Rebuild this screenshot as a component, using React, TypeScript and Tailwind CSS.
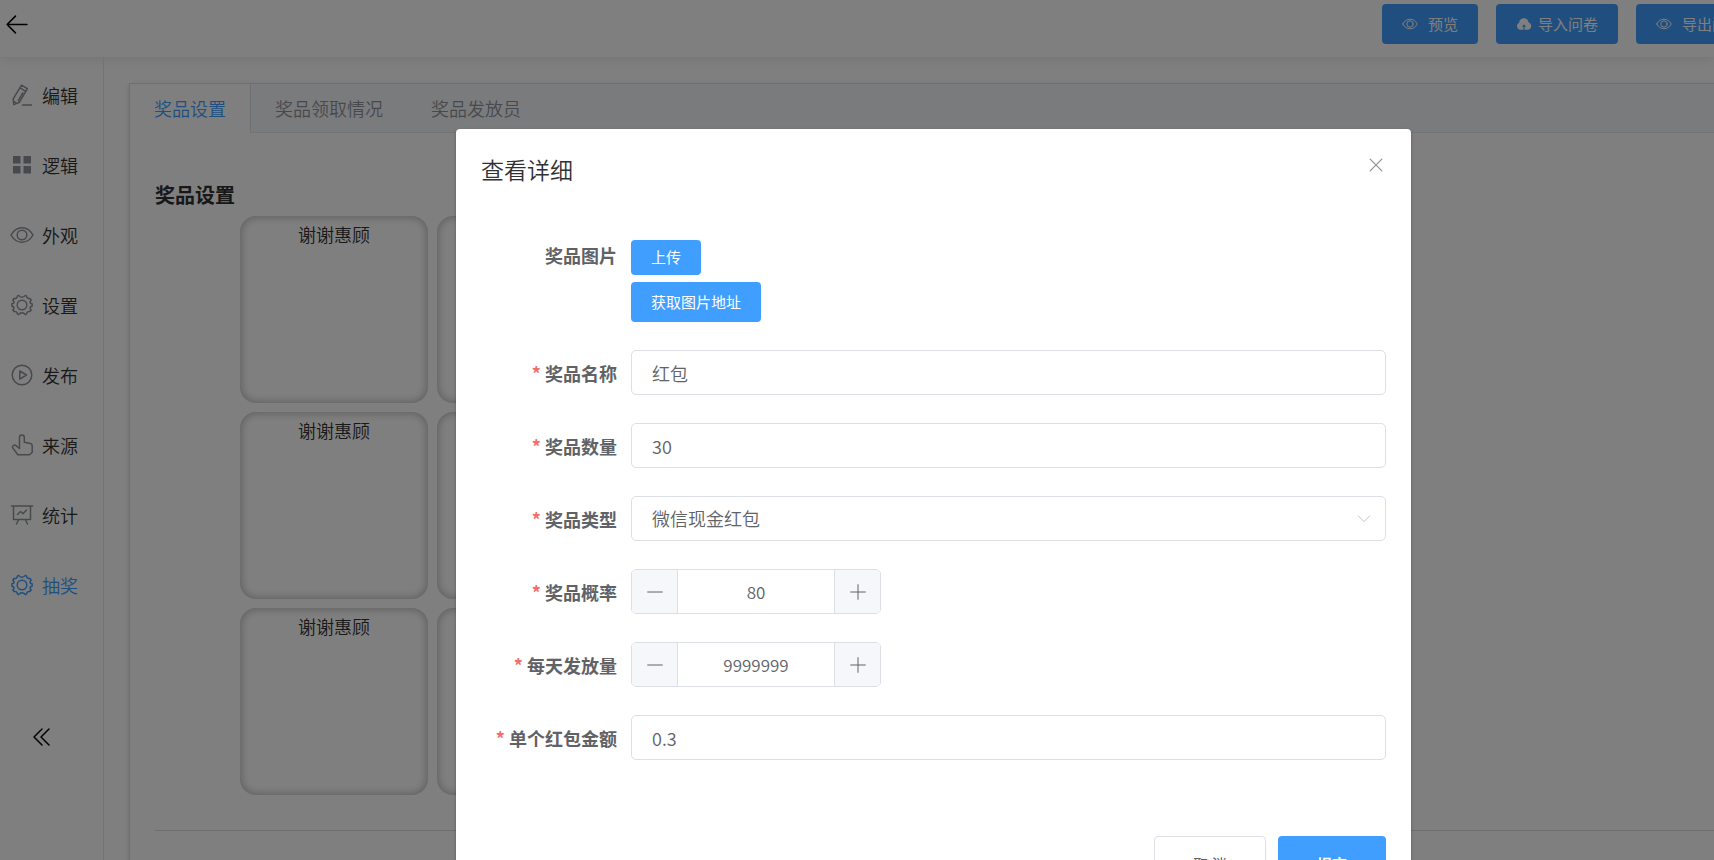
import { useState } from 'react';
import type { ReactNode } from 'react';

interface MenuItem {
  label: string;
  icon: ReactNode;
}

interface IconProps {
  className?: string;
  children: ReactNode;
}

const Icon = ({ className = 'h-6 w-6', children }: IconProps) => (
  <svg
    viewBox="0 0 24 24"
    fill="none"
    stroke="currentColor"
    strokeWidth="1.5"
    strokeLinecap="round"
    strokeLinejoin="round"
    className={`shrink-0 ${className}`}
    aria-hidden="true"
  >
    {children}
  </svg>
);

const gear = (
  <>
    <path d="M8.600 2.400 7.400 3.100Q7 6 4 5.500L2.800 7.200Q4.600 8.600 3.600 10.200L1.900 10.800V13.200L3.600 13.800Q4.600 15.400 2.800 16.800L4 18.500Q7 18 7.400 20.900L8.600 21.600Q10 19.800 12 19.800T15.400 21.600L16.600 20.900Q17 18 20 18.500L21.200 16.800Q19.400 15.400 20.400 13.800L22.100 13.200V10.800L20.400 10.200Q19.400 8.600 21.200 7.200L20 5.500Q17 6 16.600 3.100L15.400 2.400Q14 4.200 12 4.200T8.600 2.400Z" />
    <circle cx="12" cy="12" r="4.800" />
  </>
);

const eye = (
  <>
    <path d="M1 12C3.600 7.400 7.600 4.800 12 4.800S20.400 7.400 23 12C20.400 16.600 16.400 19.200 12 19.200S3.600 16.600 1 12Z" />
    <circle cx="12" cy="12" r="4.800" />
  </>
);

const menu: MenuItem[] = [
  {
    label: '编辑',
    icon: (
      <Icon>
        <path d="M11.500 2.200 17.400 5.600 9.500 19.200 3.800 21.600 3.200 15.800ZM10 4.900 15.800 8.300M12.800 10 8.300 17.700M3.600 18.200 6.400 20.400M12.500 22H21.500" />
      </Icon>
    ),
  },
  {
    label: '逻辑',
    icon: (
      <svg viewBox="0 0 24 24" fill="currentColor" className="h-6 w-6 shrink-0" aria-hidden="true">
        <path d="M3 3H10.500V10.500H3ZM13.500 3H21V10.500H13.500ZM3 13H10.500V20.500H3ZM13.500 13H21V20.500H13.500Z" />
      </svg>
    ),
  },
  { label: '外观', icon: <Icon>{eye}</Icon> },
  { label: '设置', icon: <Icon>{gear}</Icon> },
  {
    label: '发布',
    icon: (
      <Icon>
        <circle cx="12" cy="12" r="9.800" />
        <path d="M9.800 8 16.500 12 9.800 16.200Z" />
      </Icon>
    ),
  },
  {
    label: '来源',
    icon: (
      <Icon>
        <path d="M7.800 21.800 2.600 14.600C2 12.400 4.600 11.400 6 12.600L9.500 15.500V4.500C9.500 1.200 14.300 1.200 14.300 4.500V9.200L20.500 10.600Q22.200 11 22.200 12.800V19.200L19.500 21.800Z" />
      </Icon>
    ),
  },
  {
    label: '统计',
    icon: (
      <Icon>
        <path d="M1.500 3H22.500M3.500 3V16.500H20.500V3M8.800 16.500 6.500 21M15.200 16.500 17.500 21M7.500 11.500 10.500 8.500 13 10.800 16.500 7" />
      </Icon>
    ),
  },
  { label: '抽奖', icon: <Icon>{gear}</Icon> },
];

const tabs = ['奖品设置', '奖品领取情况', '奖品发放员'];

// three rows of three, only the first cell of a row has a caption
const prizes = Array.from({ length: 9 }, (_, i) => ({ id: i, name: i % 3 === 0 ? '谢谢惠顾' : '' }));

const headerButton =
  'flex h-10 shrink-0 items-center rounded bg-[#409eff] px-5 text-[15px] font-normal whitespace-nowrap text-white';
const textBox =
  'h-[45px] w-full rounded-[5px] border border-[#dcdfe6] bg-white px-5 text-[18px] text-[#606266] outline-none';

interface RowProps {
  label: string;
  htmlFor?: string;
  required?: boolean;
  children: ReactNode;
}

const FormRow = ({ label, htmlFor, required = true, children }: RowProps) => (
  <div className="mb-7 flex items-start">
    <label
      htmlFor={htmlFor}
      className="flex h-[45px] w-[150px] shrink-0 items-center justify-end gap-1 pr-[14px] text-[18px] leading-6 font-bold whitespace-nowrap text-[#606266]"
    >
      {required && <span className="text-[#f56c6c]">*</span>}
      {label}
    </label>
    <div className="min-w-0 flex-1">{children}</div>
  </div>
);

interface NumberBoxProps {
  id: string;
  value: number;
  onChange: (value: number) => void;
}

const NumberBox = ({ id, value, onChange }: NumberBoxProps) => (
  <div className="flex h-[45px] w-[250px] overflow-hidden rounded-[5px] border border-[#dcdfe6]">
    <button
      type="button"
      aria-label="减少"
      onClick={() => onChange(value - 1)}
      className="flex w-[46px] shrink-0 items-center justify-center border-r border-[#dcdfe6] bg-[#f5f7fa] text-[#606266]"
    >
      <Icon className="h-4 w-4">
        <path d="M1 12H23" />
      </Icon>
    </button>
    <input
      id={id}
      value={value}
      onChange={(e) => onChange(Number(e.target.value) || 0)}
      className="w-full min-w-0 bg-white text-center text-[17px] text-[#606266] outline-none"
    />
    <button
      type="button"
      aria-label="增加"
      onClick={() => onChange(value + 1)}
      className="flex w-[46px] shrink-0 items-center justify-center border-l border-[#dcdfe6] bg-[#f5f7fa] text-[#606266]"
    >
      <Icon className="h-4 w-4">
        <path d="M1 12H23M12 1V23" />
      </Icon>
    </button>
  </div>
);

const PrizeDialog = () => {
  const [name, setName] = useState('红包');
  const [count, setCount] = useState('30');
  const [rate, setRate] = useState(80);
  const [daily, setDaily] = useState(9999999);
  const [amount, setAmount] = useState('0.3');

  return (
    <div
      role="dialog"
      aria-label="查看详细"
      className="mt-[129px] w-[955px] shrink-0 self-start rounded-sm bg-white shadow-[0_1px_3px_rgba(0,0,0,0.3)]"
    >
      <div className="flex items-start justify-between px-[25px] pt-6">
        <h2 className="text-[23px] leading-8 text-[#303133]">查看详细</h2>
        <button type="button" aria-label="关闭" className="mt-0.5 text-[#909399]">
          <Icon className="h-5 w-5">
            <path d="M5 5 19 19M19 5 5 19" />
          </Icon>
        </button>
      </div>

      <form className="px-[25px] pt-[47px]">
        <FormRow label="奖品图片" required={false}>
          <div className="flex flex-col items-start gap-[7px] pt-2">
            <button type="button" className="h-[35px] rounded bg-[#409eff] px-5 text-[15px] font-normal text-white">
              上传
            </button>
            <button type="button" className="h-10 rounded bg-[#409eff] px-5 text-[15px] font-normal text-white">
              获取图片地址
            </button>
          </div>
        </FormRow>
        <FormRow label="奖品名称" htmlFor="name">
          <input id="name" value={name} onChange={(e) => setName(e.target.value)} className={textBox} />
        </FormRow>
        <FormRow label="奖品数量" htmlFor="count">
          <input id="count" value={count} onChange={(e) => setCount(e.target.value)} className={textBox} />
        </FormRow>
        <FormRow label="奖品类型" htmlFor="type">
          <div className="relative">
            <select id="type" className={`appearance-none ${textBox}`}>
              <option>微信现金红包</option>
            </select>
            <span className="pointer-events-none absolute top-[15px] right-[14px] text-[#c0c4cc]">
              <Icon className="h-4 w-4">
                <path d="M3 7 12 16 21 7" />
              </Icon>
            </span>
          </div>
        </FormRow>
        <FormRow label="奖品概率" htmlFor="rate">
          <NumberBox id="rate" value={rate} onChange={setRate} />
        </FormRow>
        <FormRow label="每天发放量" htmlFor="daily">
          <NumberBox id="daily" value={daily} onChange={setDaily} />
        </FormRow>
        <FormRow label="单个红包金额" htmlFor="amount">
          <input id="amount" value={amount} onChange={(e) => setAmount(e.target.value)} className={textBox} />
        </FormRow>
      </form>

      <div className="flex justify-end gap-3 px-[25px] pt-12 pb-6">
        <button
          type="button"
          className="h-14 w-28 rounded border border-[#dcdfe6] bg-white text-[15px] font-normal text-[#606266]"
        >
          取 消
        </button>
        <button type="button" className="h-14 w-[108px] rounded bg-[#409eff] text-[15px] font-bold text-white">
          提交
        </button>
      </div>
    </div>
  );
};

const App = () => {
  return (
    <div className="relative flex h-screen flex-col overflow-hidden bg-white font-['Noto_Sans_CJK_SC',sans-serif] font-[350] text-[#303133]">
      {/* Top bar */}
      <header className="flex h-[57px] shrink-0 items-start justify-between shadow-[0_2px_12px_rgba(0,0,0,0.1)]">
        <button type="button" aria-label="返回" className="mt-3 ml-1 text-black">
          <Icon className="h-[25px] w-[25px]">
            <path d="M3 12H22M11 4 3 12 11 20" />
          </Icon>
        </button>
        <div className="-mr-12 flex gap-[18px] pt-1">
          <button type="button" className={`${headerButton} gap-[10px]`}>
            <Icon className="h-4 w-4">{eye}</Icon>
            预览
          </button>
          <button type="button" className={`${headerButton} gap-[6px]`}>
            <svg viewBox="0 0 24 24" fill="currentColor" className="h-4 w-4" aria-hidden="true">
              <path
                fillRule="evenodd"
                d="M7 20.500A5.500 5.500 0 0 1 4.700 10C4.700 1.500 17.600 .8 19 9.600A5.600 5.600 0 0 1 17.500 20.500H12.800V16H15L12 12.200 9 16H11.200V20.500Z"
              />
            </svg>
            导入问卷
          </button>
          <button type="button" className={`${headerButton} gap-[10px]`}>
            <Icon className="h-4 w-4">{eye}</Icon>
            导出问卷
          </button>
        </div>
      </header>

      <div className="flex min-h-0 flex-1">
        {/* Side menu */}
        <aside className="flex w-[104px] shrink-0 flex-col border-r border-[#e6e6e6]">
          <nav className="pt-[3px]">
            {menu.map((item) => (
              <a
                key={item.label}
                href="#"
                className={`flex h-[70px] items-center gap-2 pl-[10px] text-[18px] whitespace-nowrap ${
                  item.label === '抽奖' ? 'text-[#409eff]' : ''
                }`}
              >
                <span className={item.label === '抽奖' ? 'text-[#409eff]' : 'text-[#909399]'}>{item.icon}</span>
                {item.label}
              </a>
            ))}
          </nav>
          <button type="button" aria-label="收起" className="mt-[105px] ml-[30px] self-start text-black">
            <Icon className="h-6 w-6">
              <path d="M12 4 4 12 12 20M19 4 11 12 19 20" />
            </Icon>
          </button>
        </aside>

        {/* Prize settings, wider than the window like the top bar */}
        <main className="-mr-12 min-w-0 flex-1 pt-[26px] pl-[25px]">
          <div className="border border-[#dcdfe6] pb-8 shadow-[0_2px_4px_rgba(0,0,0,0.12),0_0_6px_rgba(0,0,0,0.04)]">
            <div role="tablist" className="flex h-[49px] border-b border-[#e4e7ed] bg-[#f5f7fa]">
              {tabs.map((tab, i) => (
                <button
                  key={tab}
                  type="button"
                  role="tab"
                  aria-selected={i === 0}
                  className={
                    i === 0
                      ? '-mb-px border-r border-[#dcdfe6] bg-white px-6 text-[18px] text-[#409eff]'
                      : 'px-6 text-[18px] text-[#909399]'
                  }
                >
                  {tab}
                </button>
              ))}
            </div>
            <div className="px-[25px] pt-12">
              <h3 className="text-[20px] leading-7 font-bold">奖品设置</h3>
              <div className="mt-[7px] ml-[85px] grid grid-cols-[repeat(3,188px)] gap-[9px]">
                {prizes.map((prize) => (
                  <div
                    key={prize.id}
                    className="h-[187px] rounded-2xl pt-1 text-center text-[18px] leading-7 shadow-[inset_0_0_8px_1px_rgba(0,0,0,0.28)]"
                  >
                    {prize.name}
                  </div>
                ))}
              </div>
              <hr className="mt-[35px] border-[#dcdfe6]" />
              <p className="mt-6 pl-1 text-[18px] leading-7">宫格抽奖</p>
            </div>
          </div>
        </main>
      </div>

      {/* Mask and dialog lie over the whole page */}
      <div className="absolute inset-0 flex justify-center overflow-hidden bg-black/50 pl-[153px]">
        <PrizeDialog />
      </div>
    </div>
  );
};

export default App;
